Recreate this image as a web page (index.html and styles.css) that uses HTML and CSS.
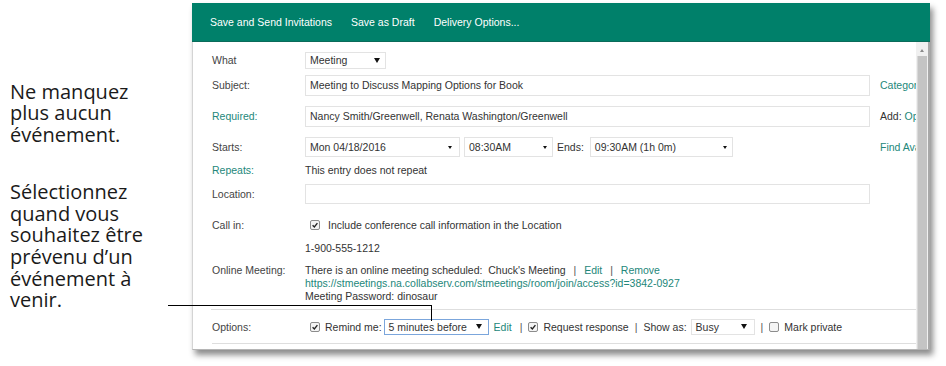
FILE: index.html
```
<!DOCTYPE html>
<html lang="fr">
  <head>
    <meta charset="UTF-8" />
    <meta name="viewport" content="width=device-width, initial-scale=1.0" />
    <title>Rappel de réunion</title>
    <link rel="stylesheet" href="styles.css">
  </head>
  <body>
    <div class="slide">
      <div class="caption">
        <p>Ne manquez<br />plus aucun<br />événement.</p>
        <p>Sélectionnez<br />quand vous<br />souhaitez être<br />prévenu d’un<br />événement à<br />venir.</p>
      </div>

      <div class="window">
        <div class="toolbar">
          <span>Save and Send Invitations</span>
          <span>Save as Draft</span>
          <span>Delivery Options...</span>
        </div>

        <div class="pane">
          <div class="form">
            <div class="row r-what">
              <div class="label">What</div>
              <div class="select s-what"><span>Meeting</span><i class="caret"></i></div>
            </div>
            <div class="row r-30">
              <div class="label">Subject:</div>
              <div class="input">Meeting to Discuss Mapping Options for Book</div>
              <div class="side link">Categories</div>
            </div>
            <div class="row r-32">
              <div class="label link">Required:</div>
              <div class="input">Nancy Smith/Greenwell, Renata Washington/Greenwell</div>
              <div class="side">Add: <span class="link">Optional</span></div>
            </div>
            <div class="row r-30">
              <div class="label">Starts:</div>
              <div class="field">
                <div class="select s-date"><span>Mon 04/18/2016</span><i class="caret small"></i></div>
                <div class="select s-time"><span>08:30AM</span><i class="caret small"></i></div>
                <span class="ends">Ends:</span>
                <div class="select s-end"><span>09:30AM (1h 0m)</span><i class="caret small"></i></div>
              </div>
              <div class="side link">Find Available Times</div>
            </div>
            <div class="row r-16">
              <div class="label link">Repeats:</div>
              <span>This entry does not repeat</span>
            </div>
            <div class="row r-32">
              <div class="label">Location:</div>
              <div class="input thin"></div>
            </div>
            <div class="row r-30">
              <div class="label">Call in:</div>
              <span class="cb on call"><svg viewBox="0 0 10 10"><path d="M2 5.2 L4.2 7.5 L8 2.6" /></svg></span>
              <span class="call-text">Include conference call information in the Location</span>
            </div>
            <div class="row r-16">
              <div class="label"></div>
              <span>1-900-555-1212</span>
            </div>
            <div class="row online">
              <div class="label">Online Meeting:</div>
              <div class="lines">
                <div>There is an online meeting scheduled:&nbsp; Chuck's Meeting <span class="bar">|</span> <span class="link">Edit</span> <span class="bar">|</span> <span class="link">Remove</span></div>
                <div class="link">https://stmeetings.na.collabserv.com/stmeetings/room/join/access?id=3842-0927</div>
                <div>Meeting Password: dinosaur</div>
              </div>
            </div>
            <div class="sep"></div>
            <div class="row options">
              <div class="label">Options:</div>
              <span class="cb on first"><svg viewBox="0 0 10 10"><path d="M2 5.2 L4.2 7.5 L8 2.6" /></svg></span>
              <span class="opt-text">Remind me:</span>
              <div class="select s-remind"><span>5 minutes before</span><i class="caret"></i></div>
              <span class="link edit">Edit</span>
              <span class="bar">|</span>
              <span class="cb on"><svg viewBox="0 0 10 10"><path d="M2 5.2 L4.2 7.5 L8 2.6" /></svg></span>
              <span class="opt-text">Request response</span>
              <span class="bar">|</span>
              <span>Show as:</span>
              <div class="select s-busy"><span>Busy</span><i class="caret"></i></div>
              <span class="bar">|</span>
              <span class="cb"></span>
              <span class="opt-text">Mark private</span>
            </div>
          </div>
          <div class="scrollbar">
            <div class="arrow"></div>
            <div class="thumb"></div>
          </div>
        </div>
      </div>

      <div class="callout"></div>
    </div>
  </body>
</html>
```

FILE: styles.css
```
body {
  margin: 0;
  background: #fff;
  font-family: "Liberation Sans", Arial, sans-serif;
  color: #333;
}
.slide {
  position: relative;
  display: flex;
  align-items: flex-start;
  width: 946px;
  height: 366px;
  padding-top: 3px;
  box-sizing: border-box;
  overflow: hidden;
}
.caption {
  width: 182px;
  flex: none;
  padding-left: 10px;
  padding-top: 77.7px;
  font-family: "Open Sans", "Noto Sans", sans-serif;
  font-size: 20px;
  line-height: 21.7px;
  color: #1a1a1a;
}
.caption p {
  margin: 0 0 35px;
}
.window {
  width: 738px;
  height: 347px;
  flex: none;
  display: flex;
  flex-direction: column;
  background: #fff;
  box-shadow: 3px 5px 6px rgba(0, 0, 0, 0.45);
}
.toolbar {
  height: 39px;
  flex: none;
  display: flex;
  align-items: center;
  gap: 19px;
  padding-left: 18px;
  background: #00806a;
  border-bottom: 1px solid #0b6b5a;
  box-sizing: border-box;
  color: #fff;
  font-size: 10.5px;
}
.pane {
  flex: 1;
  min-height: 0;
  display: flex;
  border-left: 1px solid #d4d4d4;
  border-right: 2px solid #a8a8a8;
  border-bottom: 1px solid #b5b5b5;
}
.form {
  flex: 1;
  min-width: 0;
  overflow: hidden;
  padding: 8px 0 0 19px;
  font-size: 10.5px;
}
.row {
  display: flex;
  align-items: center;
  white-space: nowrap;
}
.r-what {
  height: 20px;
}
.r-30 {
  height: 30px;
}
.r-32 {
  height: 32px;
}
.r-16 {
  height: 16px;
}
.label {
  width: 93px;
  flex: none;
  color: #444;
}
.link {
  color: #23877a;
}
.label.link {
  color: #23877a;
}
.input {
  width: 565px;
  height: 21px;
  flex: none;
  display: flex;
  align-items: center;
  padding-left: 4px;
  border: 1px solid #e3e3e3;
  box-sizing: border-box;
  color: #333;
}
.input.thin {
  height: 20px;
}
.field {
  width: 565px;
  flex: none;
  display: flex;
  align-items: center;
}
.side {
  margin-left: 10px;
}
.select {
  height: 18px;
  flex: none;
  display: flex;
  align-items: center;
  justify-content: space-between;
  padding: 0 5px 0 4px;
  border: 1px solid #e3e3e3;
  box-sizing: border-box;
  background: #fff;
}
.caret {
  width: 0;
  height: 0;
  border-left: 3px solid transparent;
  border-right: 3px solid transparent;
  border-top: 5px solid #111;
}
.caret.small {
  border-left-width: 2px;
  border-right-width: 2px;
  border-top-width: 3px;
}
.s-what {
  width: 81px;
  height: 17px;
}
.s-date {
  width: 155px;
  height: 20px;
  padding-right: 7px;
}
.s-time {
  width: 89px;
  height: 20px;
  margin-left: 4px;
  padding-left: 4px;
}
.ends {
  margin: 0 6px 0 4px;
}
.s-end {
  width: 143px;
  height: 20px;
  padding-right: 5px;
}
.cb {
  width: 8px;
  height: 8px;
  flex: none;
  border: 1px solid #8c8c8c;
  border-radius: 2px;
  background: #f4f4f4;
  display: flex;
}
.cb svg {
  width: 8px;
  height: 8px;
}
.cb path {
  fill: none;
  stroke: #222;
  stroke-width: 1.7;
}
.call {
  margin-left: 5px;
}
.call-text {
  margin-left: 8px;
}
.online {
  align-items: flex-start;
  margin-top: 8px;
  line-height: 13px;
}
.bar {
  color: #555;
  margin: 0 6px;
}
.lines .bar {
  margin: 0 5px;
}
.sep {
  margin: 6px 0 0 -1px;
  border-top: 1px solid #dedede;
}
.options {
  height: 33px;
  border-bottom: 1px solid #dedede;
}
.options .first {
  margin-left: 5px;
}
.opt-text {
  margin-left: 5px;
}
.s-remind {
  width: 105px;
  height: 16px;
  margin-left: 2px;
  border-color: #7ba6dc;
  padding-right: 6px;
}
.edit {
  margin-left: 5px;
  margin-right: 2px;
}
.s-busy {
  width: 64px;
  height: 16px;
  margin-left: 4px;
  padding-right: 7px;
}
.scrollbar {
  width: 12px;
  flex: none;
  display: flex;
  flex-direction: column;
  background: #f0f0f0;
  padding-top: 3px;
  box-sizing: border-box;
}
.arrow {
  height: 11px;
  flex: none;
  display: flex;
  justify-content: center;
  align-items: center;
}
.arrow::before {
  content: "";
  border-left: 2.5px solid transparent;
  border-right: 2.5px solid transparent;
  border-bottom: 3px solid #8a8a8a;
}
.thumb {
  flex: 1;
  margin: 0 1px 0 1px;
  background: #c4c4c4;
  border-left: 1px solid #d8d8d8;
}
.callout {
  position: absolute;
  left: 168px;
  top: 305px;
  width: 263px;
  height: 15px;
  border-top: 1px solid #000;
  border-right: 1px solid #000;
}
```
